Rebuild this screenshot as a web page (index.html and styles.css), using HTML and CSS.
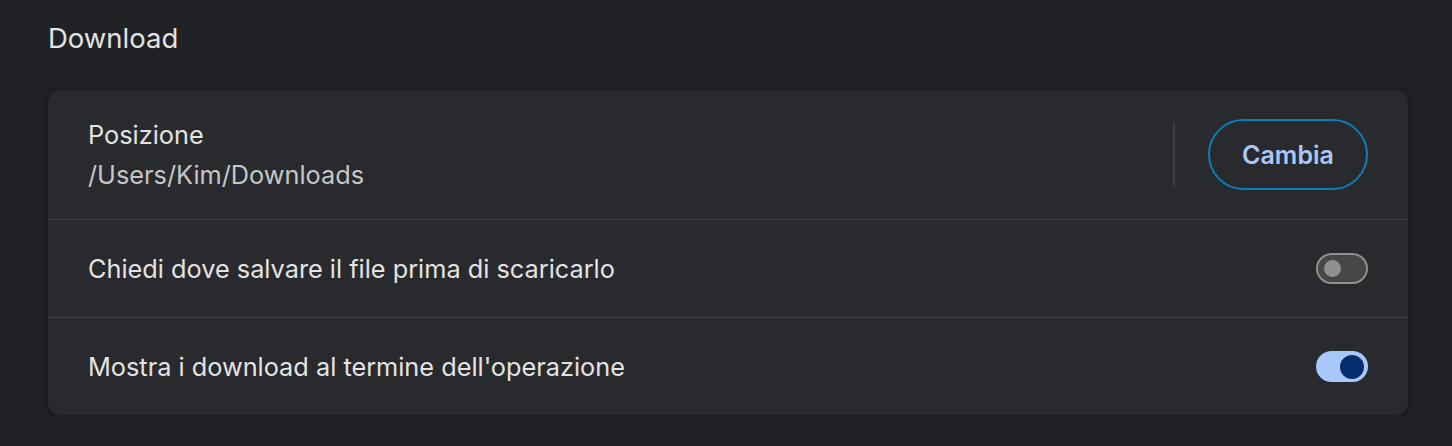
FILE: index.html
```html
<!DOCTYPE html>
<html lang="it">
<head>
<meta charset="utf-8">
<link rel="stylesheet" href="styles.css">
</head>
<body>
<main class="page">
  <h2 class="section-title">Download</h2>
  <div class="card">
    <div class="row row-location">
      <div class="row-text">
        <div class="label">Posizione</div>
        <div class="sublabel">/Users/Kim/Downloads</div>
      </div>
      <div class="vsep"></div>
      <button class="btn-outline">Cambia</button>
    </div>
    <div class="row">
      <div class="label">Chiedi dove salvare il file prima di scaricarlo</div>
      <span class="toggle"><span class="knob"></span></span>
    </div>
    <div class="row">
      <div class="label">Mostra i download al termine dell'operazione</div>
      <span class="toggle on"><span class="knob"></span></span>
    </div>
  </div>
</main>
</body>
</html>
```
FILE: styles.css
```css
html, body {
  margin: 0;
  padding: 0;
  background: #202124;
}
body {
  font-family: Inter, "Noto Sans", sans-serif;
  color: #e3e3e3;
}
.page {
  padding: 22px 44px 0 48px;
}
.section-title {
  margin: 0 0 36px 0;
  font-size: 27.5px;
  font-weight: 400;
  line-height: 32px;
  color: #e3e3e3;
}
.card {
  background: #292a2d;
  border-radius: 12px;
  box-shadow: 0 1px 3px rgba(0,0,0,0.35), 0 2px 6px rgba(0,0,0,0.2);
}
.row {
  display: flex;
  align-items: center;
  padding: 0 40px;
  height: 97px;
  border-top: 1px solid #3f4043;
}
.row:first-child {
  border-top: none;
  height: 129px;
}
.row-text {
  flex: 1;
  display: flex;
  flex-direction: column;
  gap: 10px;
}
.label {
  flex: 1;
  font-size: 25.3px;
  line-height: 30px;
}
.sublabel {
  font-size: 25.3px;
  line-height: 30px;
  color: #c4c7c5;
}
.vsep {
  width: 2px;
  height: 64px;
  background: #3c3d40;
  margin-right: 33px;
}
.btn-outline {
  width: 160px;
  height: 71px;
  border-radius: 36px;
  border: 2px solid #0b7fb8;
  background: transparent;
  color: #a8c7fa;
  font-family: Inter, "Noto Sans", sans-serif;
  font-size: 25px;
  font-weight: 600;
  cursor: pointer;
}
.toggle {
  position: relative;
  box-sizing: border-box;
  width: 52px;
  height: 31px;
  border-radius: 16px;
  border: 2px solid #8e918f;
  background: #444746;
  display: flex;
  align-items: center;
  padding-left: 6px;
}
.knob {
  width: 17px;
  height: 17px;
  border-radius: 50%;
  background: #8e918f;
}
.toggle.on {
  background: #a8c7fa;
  border-color: #a8c7fa;
  padding-left: 22px;
}
.toggle.on .knob {
  width: 24px;
  height: 24px;
  background: #062e6f;
}
```
